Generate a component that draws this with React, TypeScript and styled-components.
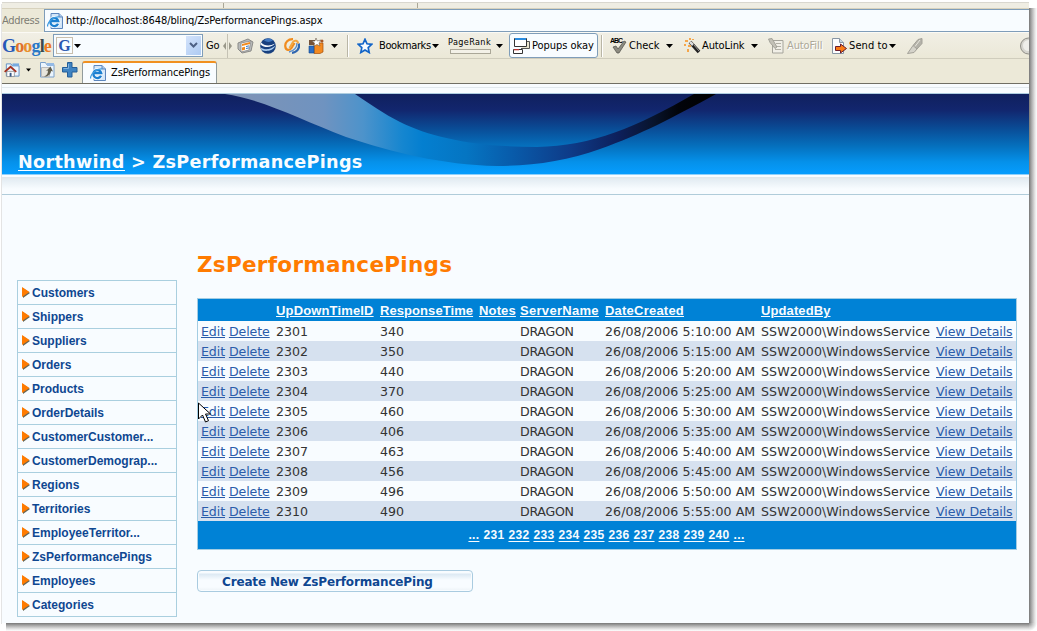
import React from 'react';
import styled, { createGlobalStyle } from 'styled-components';

const Global = createGlobalStyle`
  * { box-sizing: border-box; }
  html, body { margin: 0; padding: 0; overflow: hidden; background: #fff; }
  body { font-family: "DejaVu Sans", Verdana, sans-serif; }
`;

const Shadow = styled.div`
  position: relative;
  width: 1037px;
  height: 631px;
  padding: 2px 8px 8px 2px;
  background:
    linear-gradient(to right, #777 0, #b2b2b2 3px, #e6e6e6 6px, #fdfdfd 8px) 1029px 8px / 8px 615px no-repeat,
    linear-gradient(to bottom, #777 0, #b2b2b2 3px, #e6e6e6 6px, #fdfdfd 8px) 6px 623px / 1023px 8px no-repeat,
    radial-gradient(circle at 0 0, #888 0, #ccc 4px, #fff 8px) 1029px 623px / 8px 8px no-repeat,
    linear-gradient(#e4e4e4, #e4e4e4) 1px 4px / 1px 620px no-repeat,
    #fff;
`;

const Window = styled.div`
  display: flex;
  flex-direction: column;
  width: 1027px;
  height: 621px;
  overflow: hidden;
  background: #f8fcff;
`;

const Chrome = styled.div`
  height: 82px;
  background: #ece9d8;
  border-bottom: 1px solid #716f64;
  font-family: "DejaVu Sans Condensed", Tahoma, sans-serif;
  font-size: 11px;
  color: #000;
`;

const MenuEdge = styled.div`
  display: grid;
  grid-template-columns: 222px 194px 1fr;
  height: 6px;
  border-top: 1px solid #d9d7cf;
  background: #efede3;
  i { border-right: 1px solid #aaa797; height: 5px; }
`;

const AddressRow = styled.div`
  display: grid;
  grid-template-columns: 42px 1fr;
  align-items: center;
  height: 24px;
  border-top: 1px solid #d8d2bd;
  color: #7d7c73;
`;

const AddressField = styled.div`
  display: flex;
  align-items: center;
  gap: 3px;
  height: 23px;
  padding-left: 2px;
  border: 1px solid #7f9db9;
  border-right: 0;
  background: #f8fcff;
  color: #000;
`;

const Label = styled.span<{ $ls?: number; $size?: number; $w?: number }>`
  min-width: ${p => p.$w ?? 0}px;
  white-space: nowrap;
  line-height: 14px;
  letter-spacing: ${p => p.$ls ?? -0.1}px;
  font-size: ${p => p.$size ?? 11}px;
`;

const GoogleRow = styled.div`
  display: grid;
  grid-template-columns: 51px 153px 16px 15px 23px 24px 24px 23px 16px 10px 22px 69px 61px 92px 9px 74px 84px 63px 76px 113px 9px;
  align-items: center;
  height: 27px;
  border-top: 1px solid #fbfaf5;
  border-bottom: 1px solid #d0cdbd;
  background: linear-gradient(#f1efe5, #ebe8d7);
`;

const Logo = styled.div`
  font-family: "Liberation Serif", serif;
  font-size: 18px;
  font-weight: bold;
  line-height: 22px;
  letter-spacing: -0.85px;
  white-space: nowrap;
`;
const Tint = styled.span<{ $c: string }>`color: ${p => p.$c};`;

const SearchBox = styled.div`
  display: flex;
  align-items: center;
  width: 150px;
  height: 23px;
  padding: 1px;
  border: 1px solid #7f9db9;
  background: #f8fcff;
`;
const GMark = styled.span`
  width: 17px;
  height: 17px;
  margin: 0 1px;
  border: 1px solid #c9bfae;
  font: bold 16px/15px "Liberation Serif", serif;
  color: #2b57b0;
  text-align: center;
`;
const DropButton = styled.span`
  display: flex;
  align-items: center;
  justify-content: center;
  width: 15px;
  height: 19px;
  margin-left: auto;
  background: linear-gradient(135deg, #d3e3fb, #aecbf3);
`;
const Tool = styled.div<{ $gap?: number; $off?: boolean }>`
  display: flex;
  align-items: center;
  gap: ${p => p.$gap ?? 3}px;
  ${p => p.$off && 'color: #aca899; text-shadow: 1px 1px #fff;'}
`;
const Divider = styled.i`
  width: 2px;
  height: 22px;
  border-left: 1px solid #b9b6a6;
  border-right: 1px solid #fff;
`;
const RankBox = styled.div`
  display: flex;
  flex-direction: column;
  height: 21px;
  width: 47px;
`;
const RankBar = styled.i`
  width: 41px;
  height: 5px;
  margin: 0 0 0 2px;
  border: 1px solid #aaa798;
  background: #f3f1e8;
`;
const Popups = styled.div`
  display: flex;
  align-items: center;
  gap: 2px;
  width: 89px;
  height: 25px;
  padding-left: 3px;
  border: 1px solid #7f9db9;
  border-radius: 3px;
  background: #f8fcff;
`;

const TabRow = styled.div`
  display: grid;
  grid-template-columns: 22px 13px 23px 20px 135px;
  align-items: center;
  height: 24px;
  padding-left: 2px;
  > svg { margin-top: -2px; }
`;
const Tab = styled.div`
  display: flex;
  align-items: center;
  gap: 5px;
  height: 22px;
  margin-top: 2px;
  padding-left: 7px;
  border: 1px solid #919b9c;
  border-top: 2px solid #f09020;
  border-bottom: 0;
  border-radius: 3px 3px 0 0;
  background: #f8fcff;
`;

const PageTop = styled.div`
  height: 10px;
  border-bottom: 1px solid #adcde0;
  background: linear-gradient(#f8fcff 3px, #e2e9ee 3px, #e2e9ee 4px, #f8fcff 4px);
`;
const Banner = styled.header`
  display: grid;
  height: 80px;
  background: linear-gradient(#10205e 0%, #12266e 20%, #0a4a94 42%, #0570bd 65%, #0591ea 85%, #069dfe 100%);
  > * { grid-area: 1 / 1; }
`;
const Crumbs = styled.h1`
  align-self: end;
  margin: 0 0 2px 16px;
  font-size: 17.6px;
  line-height: 20px;
  letter-spacing: 0.3px;
  color: #f8fcff;
  white-space: nowrap;
`;
const CrumbLink = styled.a`
  display: inline-block;
  height: 19px;
  border-bottom: 1px solid #f8fcff;
`;
const SubBar = styled.div`
  height: 21px;
  border-top: 1px solid #8ed0fa;
  border-bottom: 1px solid #b0ccda;
  background: linear-gradient(#f8fcff 2px, #dfe6ea 2px, #e5eef4 5px, #f8fcff 14px);
`;

const Body = styled.div`
  display: grid;
  grid-template-columns: 160px 820px;
  column-gap: 20px;
  padding-left: 15px;
`;
const Menu = styled.nav`
  margin-top: 85px;
  border: 1px solid #aacfdf;
  height: 337px;
`;
const MenuItem = styled.a`
  display: flex;
  align-items: center;
  gap: 2px;
  height: 24px;
  padding-left: 4px;
  border-bottom: 1px solid #aacfdf;
  font: bold 12px/14px "Liberation Sans", Arial, sans-serif;
  color: #0f4791;
  &:last-child { border-bottom: 0; }
`;
const Title = styled.h2`
  margin: 57px 0 20px;
  height: 26px;
  font-size: 21.5px;
  line-height: 26px;
  letter-spacing: 0.28px;
  color: #ff7b00;
`;
const Table = styled.div`
  border: 1px solid #a3cde3;
`;
const Row = styled.div<{ $kind?: 'head' | 'alt' }>`
  display: grid;
  grid-template-columns: 75px 104px 99px 41px 85px 156px 175px 83px;
  align-items: center;
  height: ${p => (p.$kind === 'head' ? 22 : 20)}px;
  padding-top: 2px;
  background: ${p => (p.$kind === 'head' ? '#0082d6' : p.$kind === 'alt' ? '#d6e1ef' : '#f8fcff')};
  color: #333;
  font-size: 12.6px;
  line-height: 18px;
  white-space: nowrap;
  > * { padding-left: 3px; }
`;
const Cell = styled.span<{ $ls?: number }>`letter-spacing: ${p => p.$ls ?? 0}px;`;
const HeadLink = styled.a<{ $ls?: number }>`
  font: bold 13px/16px "Liberation Sans", Arial, sans-serif;
  letter-spacing: ${p => p.$ls ?? 0.15}px;
  color: #f8fcff;
  text-decoration: underline;
`;
const Link = styled.a`
  color: #2a5caa;
  text-decoration: underline;
  text-underline-offset: 1px;
`;
const Pager = styled.div`
  display: flex;
  align-items: center;
  justify-content: center;
  gap: 4px;
  height: 28px;
  padding-right: 1px;
  background: #0082d6;
  color: #f8fcff;
  font: bold 12px/14px "Liberation Sans", Arial, sans-serif;
  letter-spacing: 0.33px;
`;
const Page = styled.a<{ $current?: boolean }>`
  text-decoration: ${p => (p.$current ? 'none' : 'underline')};
  text-underline-offset: 2px;
`;
const Create = styled.button`
  display: block;
  width: 276px;
  height: 22px;
  margin-top: 20px;
  padding: 1px 0 0 24px;
  border: 1px solid #a9cbe0;
  border-radius: 4px;
  background: linear-gradient(#f8fcff 2px, #dce9f3 3px, #f8fcff 9px, #f8fcff 16px, #edf3f7 20px);
  box-shadow: inset 0 0 0 1px #f8fcff;
  font: bold 12px/18px "DejaVu Sans", Verdana, sans-serif;
  letter-spacing: -0.15px;
  color: #0f4791;
  text-align: left;
  white-space: nowrap;
`;
const Pointer = styled.svg`
  position: absolute;
  left: 198px;
  top: 402px;
`;

const Caret = ({ w = 7 }: { w?: number }) => (
  <svg width={w} height="4" viewBox="0 0 7 4"><path d="M0 0h7L3.5 4z" fill="#000" /></svg>
);
const IeIcon = () => (
  <svg width="16" height="16" viewBox="0 0 16 16">
    <path d="M4 .5h8l3.500 3.500v11.500H4z" fill="#d3e6f8" stroke="#5c86bd" />
    <path d="M12 .5V4h3.500" fill="#a9c9ea" stroke="#5c86bd" />
    <path d="M11 10.800a4 4 0 1 1 .3-2.600H4.200" fill="none" stroke="#f4faff" strokeWidth="4" />
    <path d="M11 10.800a4 4 0 1 1 .3-2.600H4.200" fill="none" stroke="#1b7fd0" strokeWidth="2.300" />
    <path d="M.8 13.500C-.5 10 6 3.500 12 4" fill="none" stroke="#3d9be0" strokeWidth="1.200" />
  </svg>
);
const NewsIcon = () => (
  <svg width="17" height="16" viewBox="0 0 17 16">
    <path d="M1 5l10-4 5 3-2 9-9 2-4-4z" fill="#b9bbbb" stroke="#8b8b88" />
    <path d="M4 5l10-2-2 9-8 2z" fill="#fff" stroke="#888" strokeWidth=".8" />
    <path d="M5 6l8-2v2L5 8z" fill="#f28a1c" />
    <path d="M5 9.500l3-.7v3l-3 .6z" fill="#f28a1c" />
    <path d="M9 8.500l3-.6M9 10.500l3-.6" stroke="#3978c4" />
  </svg>
);
const GlobeIcon = () => (
  <svg width="16" height="16" viewBox="0 0 16 16">
    <circle cx="8" cy="8" r="7.800" fill="#17407f" />
    <path d="M1.200 4.500C4 8 10 8.500 15 5.500 12 9.500 5 10.500.5 6.500z" fill="#f4f8fc" />
    <path d="M.6 9.500C5 12.500 11 11.500 15.600 7.500 13 13 6 14 1.500 12z" fill="#a9cdf0" />
    <path d="M4 2.500c3 2 6 2 9-.2C9.500-.4 6 .4 4 2.500z" fill="#3f78c2" />
  </svg>
);
const RingsIcon = () => (
  <svg width="16" height="16" viewBox="0 0 16 16" fill="none" strokeWidth="2.200">
    <path d="M15 5.500c.8 5-2 9-7 9.300" stroke="#2f66b0" />
    <path d="M13 5c.5 4-3 8-8 9" stroke="#5d8fcc" strokeWidth="1.500" />
    <path d="M9 1.200C4 1 .8 4.500 1.300 8.500s4.200 4.500 6.200 1.500l3-5" stroke="#f08c1e" />
    <path d="M5.500 10L9 4c1.500-2.300 5-1.500 5 1.500" stroke="#f4a640" strokeWidth="2" />
  </svg>
);
const GiftIcon = () => (
  <svg width="16" height="16" viewBox="0 0 16 16">
    <path d="M1 2h6v5H1z" fill="#74533a" /><path d="M6 5h9v9l-3 1.500H6z" fill="#f38a20" stroke="#a34f0c" strokeWidth=".7" />
    <path d="M1 8h5v7H1z" fill="#2b6ec6" stroke="#154687" strokeWidth=".6" />
    <path d="M8 0l1.200 3L13 2l-2 3 1 3-3-1.500L6 8l.5-3L4 3h3z" fill="#fff" stroke="#6a5a4a" strokeWidth=".6" />
    <circle cx="14" cy="3" r="1.500" fill="#a55523" />
  </svg>
);
const StarIcon = () => (
  <svg width="16" height="16" viewBox="0 0 16 16">
    <path d="M8 1.300l2 4.500 4.800.5-3.600 3.300 1 4.900L8 12l-4.200 2.500 1-4.900L1.200 6.300 6 5.800z" fill="#f8fcff" stroke="#1365c8" strokeWidth="1.700" />
  </svg>
);
const PopupIcon = () => (
  <svg width="17" height="17" viewBox="0 0 17 17">
    <path d="M14 4.500h2.500v7H8" fill="#e9e5cf" stroke="#555" />
    <path d="M1.500 1.500h12v8h-12z" fill="#fff" stroke="#333" /><path d="M2 1h11v2H2z" fill="#2b8ce0" />
    <path d="M.5 12.500h9v4h-9z" fill="#fff" stroke="#333" /><path d="M1 12h5v1.300H1z" fill="#b83330" />
  </svg>
);
const CheckIcon = () => (
  <svg width="17" height="17" viewBox="0 0 17 17">
    <text x="0" y="6" fontFamily="Liberation Sans, sans-serif" fontSize="7" fontWeight="bold" textLength="13">ABC</text>
    <path d="M3 10l3-1 2 3 6-8 2 1-7 11H7z" fill="#8c8b80" stroke="#4f4e47" strokeWidth=".7" />
  </svg>
);
const WandIcon = () => (
  <svg width="17" height="16" viewBox="0 0 17 16">
    <path d="M6 4l9 10" stroke="#222" strokeWidth="3.500" /><path d="M6 4l3 3" stroke="#ddd" strokeWidth="2.500" /><path d="M10 7l5 6" stroke="#999" />
    <path d="M1 2h3v2H1zM5 0h2v2H5zM8 1h2v1H8zM0 6h2v2H0zM4 7h3v2H4zM3 11h2v3H3z" fill="#f5a64a" />
  </svg>
);
const FillIcon = () => (
  <svg width="16" height="16" viewBox="0 0 16 16">
    <path d="M4.500 2.500h10.500v12.500H4.500z" fill="#f1efe7" stroke="#a5a49b" />
    <path d="M8 5.500h5M8 8.500h5M7 11.500h6" stroke="#b2b0a6" />
    <path d="M.5 1l3.500-.5 5 8.500-2 1.500-5-6z" fill="#c3c1b7" stroke="#98978e" strokeWidth=".8" />
  </svg>
);
const SendIcon = () => (
  <svg width="17" height="16" viewBox="0 0 17 16">
    <path d="M1.500.5h7l4 4v11h-11z" fill="#fbfcfd" stroke="#8896a4" /><path d="M8.500.5v4h4" fill="#c8d6e0" stroke="#8896a4" />
    <path d="M4.500 8.500h5v-2.500l6 4.500-6 4.500v-2.500h-5z" fill="#f97a15" stroke="#6b1c2c" />
  </svg>
);
const PenIcon = () => (
  <svg width="16" height="16" viewBox="0 0 16 16">
    <path d="M11 1.500l4-1v5L10 11 6 7.500z" fill="#b4b2a9" stroke="#a3a198" /><path d="M6 7.500L10 11l-3 3.500-6.500 1z" fill="#d5d3ca" stroke="#a3a198" /><path d="M13 2L8 8.500" stroke="#e8e6dd" />
  </svg>
);
const HomeIcon = () => (
  <svg width="16" height="16" viewBox="0 0 17 16">
    <path d="M2.500 1.500h5l1 2h7.500v11h-13.500z" fill="#ebf5fe" stroke="#5f8fc4" /><path d="M9 1h7v3H9z" fill="#78aadf" />
    <path d="M3 9.500h8V15H3z" fill="#fff" stroke="#777" strokeWidth=".7" /><path d="M.7 10L7 4.500l6 5.500" fill="none" stroke="#a32f1f" strokeWidth="2" />
    <path d="M6 11h2v4H6z" fill="#355785" />
  </svg>
);
const PageIcon = () => (
  <svg width="16" height="16" viewBox="0 0 16 16">
    <path d="M1.500.5h5l1 2h7.500v12.500h-13.500z" fill="#ebf5fe" stroke="#7aa0ca" /><path d="M8 1h7v3H8z" fill="#94bae5" />
    <path d="M2.500 5.500h8v9h-8z" fill="#e7e5dc" stroke="#bbb" />
    <path d="M5 14.500c3-1 4-3 4-6L7 9l4.500-4.500 2.500 5-2-.5c0 3-3 6-7 5.500z" fill="#625e4d" />
  </svg>
);
const PlusIcon = () => (
  <svg width="16" height="16" viewBox="0 0 16 16"><path d="M5.500.5h4.500v5h5v4.500h-5v5h-4.500v-5h-5v-4.500h5z" fill="#3f83c2" stroke="#245e98" /><path d="M6.500 2v4.500h-5" stroke="#7fb2de" fill="none" /></svg>
);

const BannerSwoosh = () => (
  <svg width="1027" height="80" viewBox="0 0 1027 80">
    <defs>
      <linearGradient id="ribbon" gradientUnits="userSpaceOnUse" x1="223" y1="0" x2="716" y2="0">
        <stop offset="0" stopColor="#7f93b5" /><stop offset=".2" stopColor="#6f93c0" />
        <stop offset=".28" stopColor="#4d93cb" /><stop offset=".36" stopColor="#1586d0" />
        <stop offset=".4" stopColor="#047fd0" />
        <stop offset=".49" stopColor="#0575c2" /><stop offset=".58" stopColor="#085cab" />
        <stop offset=".7" stopColor="#0e3b88" /><stop offset=".8" stopColor="#0d1f5a" />
        <stop offset=".87" stopColor="#08142c" /><stop offset=".92" stopColor="#02040a" /><stop offset="1" stopColor="#000" />
      </linearGradient>
    </defs>
    <path d="M223 0H353C368 10 382 20 398 28C430 44 475 53 535 53C590 52 635 33 692 0H714C670 24 640 40 598 55C565 67 530 72 495 72C440 71 390 58 344 43C300 26 260 5 223 0Z" fill="url(#ribbon)" />
  </svg>
);

const menu = ['Customers', 'Shippers', 'Suppliers', 'Orders', 'Products', 'OrderDetails', 'CustomerCustomer...',
  'CustomerDemograp...', 'Regions', 'Territories', 'EmployeeTerritor...', 'ZsPerformancePings', 'Employees', 'Categories'];
const heads: { name: string; ls?: number }[] = [
  { name: '' }, { name: 'UpDownTimeID' }, { name: 'ResponseTime', ls: 0.07 }, { name: 'Notes' },
  { name: 'ServerName', ls: 0.3 }, { name: 'DateCreated', ls: 0.22 }, { name: 'UpdatedBy', ls: 0.1 }, { name: '' },
];
const times = [340, 350, 440, 370, 460, 406, 463, 456, 496, 490];
const pages = ['...', '231', '232', '233', '234', '235', '236', '237', '238', '239', '240', '...'];

export default function App() {
  return (
    <Shadow>
      <Global />
      <Window>
        <Chrome>
          <MenuEdge><i /><i /></MenuEdge>
          <AddressRow>
            <Label $ls={-0.3}>Address</Label>
            <AddressField><IeIcon /><Label>http://localhost:8648/blinq/ZsPerformancePings.aspx</Label></AddressField>
          </AddressRow>
          <GoogleRow>
            <Logo>
              <Tint $c="#2858b8">G</Tint><Tint $c="#e0702c">o</Tint><Tint $c="#e8902c">o</Tint>
              <Tint $c="#2878c8">g</Tint><Tint $c="#3a4a50">l</Tint><Tint $c="#ea7a24">e</Tint>
            </Logo>
            <SearchBox>
              <GMark>G</GMark><Caret />
              <DropButton><svg width="9" height="7" viewBox="0 0 9 7"><path d="M1 1l3.500 3.500L8 1" fill="none" stroke="#4d6185" strokeWidth="2" /></svg></DropButton>
            </SearchBox>
            <Label>Go</Label>
            <svg width="11" height="24" viewBox="0 0 9 24"><path d="M4.500 0v24" stroke="#c5c2b4" /><path d="M3 8v8L0 12zM6 8v8l3-4z" fill="#999789" /></svg>
            <NewsIcon /><GlobeIcon /><RingsIcon /><GiftIcon />
            <Tool><Caret /></Tool>
            <Divider />
            <Tool><StarIcon /></Tool>
            <Tool $gap={0}><Label $w={53} $ls={-0.4}>Bookmarks</Label><Caret /></Tool>
            <Tool $gap={1}><RankBox><Label $size={9} $ls={0.4}>PageRank</Label><RankBar /></RankBox><Caret /></Tool>
            <Popups><PopupIcon /><Label $ls={-0.05}>Popups okay</Label></Popups>
            <Divider />
            <Tool $gap={2}><CheckIcon /><Label $w={35} $ls={0}>Check</Label><Caret /></Tool>
            <Tool $gap={1}><WandIcon /><Label $w={48}>AutoLink</Label><Caret /></Tool>
            <Tool $off><FillIcon /><Label>AutoFill</Label></Tool>
            <Tool $gap={1}><SendIcon /><Label $w={38} $ls={0.1}>Send to</Label><Caret /></Tool>
            <Tool><PenIcon /></Tool>
            <svg width="9" height="18" viewBox="0 0 9 18"><circle cx="8.500" cy="9" r="8" fill="#d5d4ce" stroke="#8f8e87" /><circle cx="8.500" cy="8.500" r="5.500" fill="#eeeeea" /></svg>
          </GoogleRow>
          <TabRow>
            <HomeIcon /><Caret w={5} />
            <PageIcon /><PlusIcon />
            <Tab><IeIcon /><Label>ZsPerformancePings</Label></Tab>
          </TabRow>
        </Chrome>
        <PageTop />
        <Banner>
          <BannerSwoosh />
          <Crumbs><CrumbLink>Northwind</CrumbLink> &gt; ZsPerformancePings</Crumbs>
        </Banner>
        <SubBar />
        <Body>
          <Menu>
            {menu.map(m => (
              <MenuItem key={m}>
                <svg width="8" height="11" viewBox="0 0 8 11"><path d="M1 1l7 5-7 5z" fill="#665" /><path d="M0 0l7.500 5L0 10z" fill="#ff7b00" /></svg>
                {m}
              </MenuItem>
            ))}
          </Menu>
          <main>
            <Title>ZsPerformancePings</Title>
            <Table>
              <Row $kind="head">{heads.map((h, i) => <span key={i}>{h.name && <HeadLink $ls={h.ls}>{h.name}</HeadLink>}</span>)}</Row>
              {times.map((t, i) => (
                <Row key={t} $kind={i % 2 ? 'alt' : undefined}>
                  <Cell $ls={-0.1}><Link>Edit</Link> <Link>Delete</Link></Cell>
                  <Cell>{2301 + i}</Cell>
                  <Cell>{t}</Cell>
                  <Cell />
                  <Cell $ls={-0.3}>DRAGON</Cell>
                  <Cell $ls={0.08}>26/08/2006 5:{10 + i * 5}:00 AM</Cell>
                  <Cell $ls={0.07}>SSW2000\WindowsService</Cell>
                  <Cell $ls={-0.08}><Link>View Details</Link></Cell>
                </Row>
              ))}
              <Pager>{pages.map((p, i) => <Page key={i} $current={p === '231'}>{p}</Page>)}</Pager>
            </Table>
            <Create>Create New ZsPerformancePing</Create>
          </main>
        </Body>
      </Window>
      <Pointer width="13" height="22" viewBox="0 0 13 22">
        <path d="M.5 1v16l4-4 3 7 3-1.300-3-6.700h5z" fill="#fff" stroke="#000" />
      </Pointer>
    </Shadow>
  );
}
